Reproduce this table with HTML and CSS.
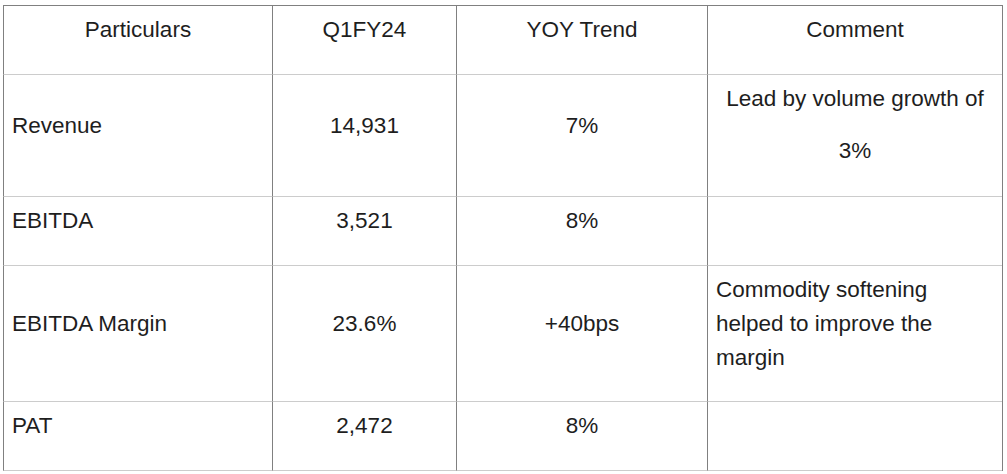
FILE: index.html
```html
<!DOCTYPE html>
<html>
<head>
<meta charset="utf-8">
<link rel="stylesheet" href="styles.css">
</head>
<body>
<table class="fin">
  <thead>
    <tr>
      <th class="c1">Particulars</th>
      <th class="c2">Q1FY24</th>
      <th class="c3">YOY Trend</th>
      <th class="c4">Comment</th>
    </tr>
  </thead>
  <tbody>
    <tr>
      <td class="label">Revenue</td>
      <td>14,931</td>
      <td>7%</td>
      <td class="comment-split"><span class="first">Lead by volume growth of</span><span>3%</span></td>
    </tr>
    <tr>
      <td class="label">EBITDA</td>
      <td>3,521</td>
      <td>8%</td>
      <td></td>
    </tr>
    <tr>
      <td class="label">EBITDA Margin</td>
      <td>23.6%</td>
      <td>+40bps</td>
      <td class="comment-left">Commodity softening helped to improve the margin</td>
    </tr>
    <tr>
      <td class="label">PAT</td>
      <td>2,472</td>
      <td>8%</td>
      <td></td>
    </tr>
  </tbody>
</table>
</body>
</html>
```
FILE: styles.css
```css
html, body {
  margin: 0;
  padding: 0;
  background: #ffffff;
}

body {
  font-family: "Liberation Sans", Arial, sans-serif;
  color: #1e1e1e;
}

.fin {
  margin: 5px 0 0 3px;
  width: 1000px;
  table-layout: fixed;
  border-collapse: separate;
  border-spacing: 0;
  border-top: 1px solid #808080;
  border-right: 1px solid #808080;
  font-size: 22.5px;
  line-height: 34px;
}

.fin th,
.fin td {
  box-sizing: border-box;
  border-left: 1px solid #808080;
  border-bottom: 1px solid #cccccc;
  padding: 7px 8px 27px 8px;
  text-align: center;
  vertical-align: middle;
  font-weight: normal;
}

.fin .c1 { width: 269px; }
.fin .c2 { width: 184px; }
.fin .c3 { width: 251px; }
.fin .c4 { width: 295px; }

.fin td.label {
  text-align: left;
}

.fin td.comment-split {
  padding-bottom: 28px;
}

.comment-split span {
  display: block;
}

.comment-split .first {
  margin-bottom: 18px;
  white-space: nowrap;
}

.fin td.comment-left {
  text-align: left;
  padding-bottom: 26px;
}
```
